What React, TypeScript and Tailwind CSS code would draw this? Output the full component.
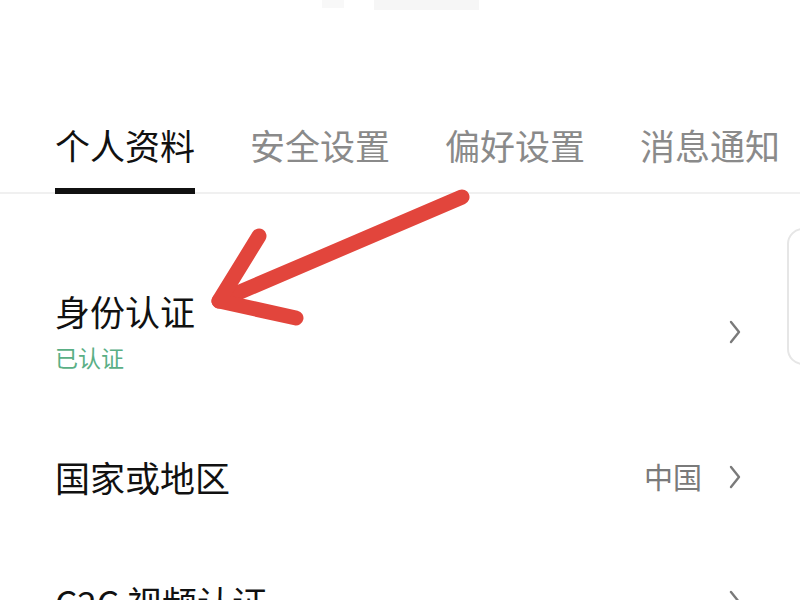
import React from "react";

const Chevron = () => (
  <svg width="14" height="26" viewBox="0 0 14 26" className="shrink-0">
    <polyline points="3,3 11,13 3,23" fill="none" stroke="#7a7a7a" strokeWidth="2.4" strokeLinecap="round" strokeLinejoin="round" />
  </svg>
);

export default function App() {
  const tabs = ["个人资料", "安全设置", "偏好设置", "消息通知"];
  return (
    <div
      className="relative w-[800px] h-[600px] overflow-hidden bg-white"
      style={{ fontFamily: '"Noto Sans CJK SC", "Noto Sans", sans-serif' }}
    >
      <div className="h-[127px] flex items-start pl-[322px] gap-[30px]">
        <div className="w-[22px] h-[8px] bg-[#f8f8f8]" />
        <div className="w-[105px] h-[10px] bg-[#f6f6f6]" />
      </div>

      <div className="flex pl-[55px] gap-[55px] border-b-2 border-[#f0f0f0]">
        {tabs.map((t, i) => (
          <div key={t} className="flex flex-col">
            <span
              className={`text-[35px] leading-[35px] whitespace-nowrap ${
                i === 0 ? "text-[#111111]" : "text-[#8a8a8a]"
              }`}
            >
              {t}
            </span>
            <div className={`mt-[26px] h-[6px] -mb-[2px] ${i === 0 ? "bg-[#111111]" : "bg-transparent"}`} />
          </div>
        ))}
      </div>

      <div className="flex flex-col pl-[55px] pr-[58px]">
        <div className="flex items-center justify-between pt-[99px]">
          <div className="flex flex-col">
            <span className="text-[35px] leading-[35px] text-[#111111]">身份认证</span>
            <span className="mt-[16px] text-[23px] leading-[26px] text-[#5aaf85]">已认证</span>
          </div>
          <Chevron />
        </div>

        <div className="flex items-center justify-between pt-[89px]">
          <span className="text-[35px] leading-[35px] text-[#111111]">国家或地区</span>
          <div className="flex items-center gap-[26px]">
            <span className="text-[29px] leading-[35px] text-[#7a7a7a]">中国</span>
            <Chevron />
          </div>
        </div>

        <div className="flex items-center justify-between pt-[90px]">
          <span className="text-[35px] leading-[35px] text-[#111111]">C2C 视频认证</span>
          <Chevron />
        </div>
      </div>

      <div className="absolute left-[787px] top-[228px] w-[40px] h-[137px] rounded-[16px] border-2 border-[#e6e6e6] bg-white" />

      <svg className="absolute inset-0 pointer-events-none" width="800" height="600" viewBox="0 0 800 600">
        <g fill="none" stroke="#e2453c" strokeWidth="15" strokeLinecap="round" strokeLinejoin="round">
          <line x1="462" y1="197" x2="219" y2="301" />
          <polyline points="259,236 219,301 296,318" />
        </g>
      </svg>
    </div>
  );
}
